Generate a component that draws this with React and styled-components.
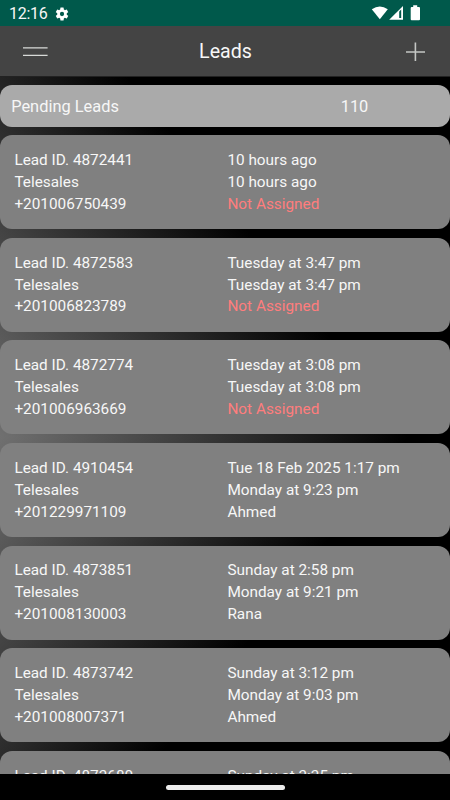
import React from 'react'
import styled, { createGlobalStyle } from 'styled-components'

const GlobalStyle = createGlobalStyle`
* {
  box-sizing: border-box;
}
body {
  margin: 0;
  background: #000;
  font-family: Roboto, "Liberation Sans", sans-serif;
}
`
const Container = styled.div`
height: 100vh;
display: flex;
flex-direction: column;
overflow: hidden;
color: #f7f7f7;
`
const StatusBar = styled.div`
height: 26px;
flex-shrink: 0;
display: flex;
align-items: center;
justify-content: space-between;
padding: 2px 29px 0 9px;
background-color: #00594b;
`
const Clock = styled.div`
display: flex;
align-items: center;
gap: 6px;
font-size: 16px;
letter-spacing: -0.25px;
line-height: 22px;
`
const StatusIcons = styled.div`
display: flex;
align-items: center;
`
const Navbar = styled.div`
height: 51px;
flex-shrink: 0;
display: flex;
align-items: center;
justify-content: space-between;
padding: 0 22px 0 23px;
background-color: #444;
border-bottom: 1px solid #222;
`
const Title = styled.h1`
margin: 0;
padding-top: 1px;
font-size: 19.6px;
font-weight: 400;
line-height: 24px;
`
const NavButton = styled.button`
width: 25px;
height: 25px;
display: flex;
align-items: center;
justify-content: center;
padding: 0;
border: none;
background: none;
cursor: pointer;
`
const List = styled.div`
flex: 1;
min-height: 0;
overflow: hidden;
display: flex;
flex-direction: column;
gap: 8.55px;
padding: 8px 0 0 0.4px;
background:
  linear-gradient(52deg, #707070, #000 322px) top / 100% 360px no-repeat,
  linear-gradient(128deg, #707070, #000 322px) bottom / 100% 337px no-repeat;
`
const Pending = styled.div`
height: 41.7px;
flex-shrink: 0;
display: flex;
align-items: center;
padding: 1px 0 0 10.8px;
border-radius: 12px;
background-color: #aaa;
font-size: 16.4px;
`
const PendingLabel = styled.span`
width: 329.5px;
`
const Card = styled.div`
height: 94.05px;
flex-shrink: 0;
display: grid;
grid-template-columns: 213px 1fr;
padding: 14.8px 0 0 14px;
border-radius: 12px;
background-color: #808080;
font-size: 15.33px;
line-height: 21.9px;
white-space: nowrap;
`
const Owner = styled.div`
color: ${props => props.$assigned ? "inherit" : "#ff7d7d"};
`
const BottomBar = styled.div`
height: 26px;
flex-shrink: 0;
display: flex;
align-items: center;
justify-content: center;
background-color: #000;
`
const Handle = styled.div`
width: 119px;
height: 5px;
border-radius: 3px;
background-color: #ececec;
`

const leads = [
    { id: "4872441", phone: "+201006750439", created: "10 hours ago", updated: "10 hours ago" },
    { id: "4872583", phone: "+201006823789", created: "Tuesday at 3:47 pm", updated: "Tuesday at 3:47 pm" },
    { id: "4872774", phone: "+201006963669", created: "Tuesday at 3:08 pm", updated: "Tuesday at 3:08 pm" },
    { id: "4910454", phone: "+201229971109", created: "Tue 18 Feb 2025 1:17 pm", updated: "Monday at 9:23 pm", owner: "Ahmed" },
    { id: "4873851", phone: "+201008130003", created: "Sunday at 2:58 pm", updated: "Monday at 9:21 pm", owner: "Rana" },
    { id: "4873742", phone: "+201008007371", created: "Sunday at 3:12 pm", updated: "Monday at 9:03 pm", owner: "Ahmed" },
    { id: "4873680", phone: "", created: "Sunday at 3:35 pm", updated: "", owner: " " },
]

const GearIcon = () => (
    <svg width="16" height="16" viewBox="0 0 24 24" fill="#fff">
        <path d="M19.14 12.94c.04-.3.06-.61.06-.94s-.02-.64-.07-.94l2.03-1.58a.5.5 0 0 0 .12-.61l-1.92-3.32a.5.5 0 0 0-.59-.22l-2.39.96a7 7 0 0 0-1.62-.94l-.36-2.54a.48.48 0 0 0-.48-.41h-3.84a.48.48 0 0 0-.47.41l-.36 2.54a7.3 7.3 0 0 0-1.62.94l-2.39-.96a.48.48 0 0 0-.59.22L2.74 8.87a.48.48 0 0 0 .12.61l2.03 1.58a6 6 0 0 0 0 1.88l-2.03 1.58a.5.5 0 0 0-.12.61l1.92 3.32c.12.22.37.29.59.22l2.39-.96c.5.38 1.03.7 1.62.94l.36 2.54c.05.24.24.41.48.41h3.84c.24 0 .44-.17.47-.41l.36-2.54a7.3 7.3 0 0 0 1.62-.94l2.39.96c.22.08.47 0 .59-.22l1.92-3.32a.48.48 0 0 0-.12-.61zM12 15.2a3.2 3.2 0 1 1 0-6.4 3.2 3.2 0 0 1 0 6.4z" />
    </svg>
)

// wifi, mobile signal and battery
const SignalIcons = () => (
    <svg width="50" height="18" viewBox="0 0 50 18" fill="#fff">
        <path d="M0.8 4.2Q8.8 -1.2 16.8 4.2L8.8 14.2Z" />
        <path d="M32 1V14.8H18.2Z" />
        <path d="M28.2 6.4L30.2 4.6V13H28.2Z" fill="#00594b" />
        <path d="M42.2 0.3h4V2h1.8a1 1 0 0 1 1 1v11.2a1 1 0 0 1-1 1h-7.3a1 1 0 0 1-1-1V3a1 1 0 0 1 1-1h1.5z" />
    </svg>
)

const LeadCard = ({ lead }) => (
    <Card>
        <div>
            <div>Lead ID. {lead.id}</div>
            {lead.phone && <div>Telesales</div>}
            <div>{lead.phone}</div>
        </div>
        <div>
            <div>{lead.created}</div>
            <div>{lead.updated}</div>
            <Owner $assigned={lead.owner}>{lead.owner || "Not Assigned"}</Owner>
        </div>
    </Card>
)

const App = () => {
    return (
        <Container>
            <GlobalStyle />
            <StatusBar>
                <Clock>12:16 <GearIcon /></Clock>
                <StatusIcons><SignalIcons /></StatusIcons>
            </StatusBar>
            <Navbar>
                <NavButton>
                    <svg width="25" height="25" viewBox="0 0 25 25" stroke="#d8dad8" strokeWidth="1.2">
                        <path d="M0 8.8H24.6M0 16.4H24.6" />
                    </svg>
                </NavButton>
                <Title>Leads</Title>
                <NavButton>
                    <svg width="19" height="19" viewBox="0 0 19 19" stroke="#c4c6c4" strokeWidth="1.6">
                        <path d="M0 10H19M9.4 0.5V19" />
                    </svg>
                </NavButton>
            </Navbar>
            <List>
                <Pending>
                    <PendingLabel>Pending Leads</PendingLabel>
                    <span>110</span>
                </Pending>
                {leads.map((lead) => (
                    <LeadCard key={lead.id} lead={lead} />
                ))}
            </List>
            <BottomBar>
                <Handle />
            </BottomBar>
        </Container>
    )
}

export default App
